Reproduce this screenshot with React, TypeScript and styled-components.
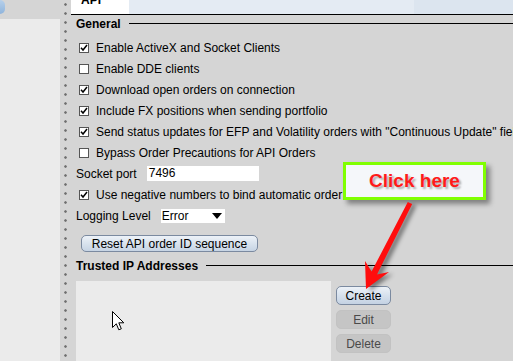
import { FC } from "react"
import styled, { createGlobalStyle } from "styled-components"

const GlobalStyle = createGlobalStyle`
    html, body {
        margin:0;
        padding:0;
        background:#d5d5d5;
    }
    body {
        font-family:"Liberation Sans", Arial, sans-serif;
        font-size:12px;
        color:#000;
    }
`

const Screen = styled.div`
    position:relative;
    display:flex;
    width:513px;
    height:361px;
    overflow:hidden;
    background:#d5d5d5;
`

const SidePanel = styled.div`
    width:60px;
    flex-shrink:0;
    display:flex;
    flex-direction:column;
    background:#ebebeb;
`

const SideTop = styled.div`
    height:19px;
    background:#d5d5d5;
    display:flex;
`

const Blob = styled.div`
    width:5px;
    height:14px;
    border-radius:0 6px 6px 0;
    background:linear-gradient(180deg, #b7d0ea, #8fb4dc);
`

const Splitter = styled.div`
    width:11px;
    flex-shrink:0;
    background-color:#d5d5d5;
    background-image:radial-gradient(circle, #6e6e6e 0, #6e6e6e 0.9px, rgba(110,110,110,0.35) 1.3px, transparent 1.8px);
    background-size:11px 9px;
    background-position:0 0;
`

const Main = styled.div`
    flex:1;
    display:flex;
    flex-direction:column;
    min-width:0;
`

const TabBar = styled.div`
    display:flex;
    height:14px;
    border-bottom:1px solid #000;
    flex-shrink:0;
`

const Tab = styled.div`
    width:58px;
    background:#fff;
    overflow:hidden;
    padding-left:10px;
    box-sizing:border-box;
    font-weight:bold;
    line-height:14px;

    & span {
        display:block;
        margin-top:-7px;
    }
`

const TabFill = styled.div<{ $color: string; $width?: number }>`
    background:${p => p.$color};
    ${p => p.$width ? `width:${p.$width}px;` : 'flex:1;'}
`

const Content = styled.div`
    display:flex;
    flex-direction:column;
    padding-left:5px;
`

const SectionHeader = styled.div<{ $top: number }>`
    display:flex;
    align-items:center;
    gap:8px;
    height:17px;
    margin-top:${p => p.$top}px;
    font-weight:bold;
    white-space:nowrap;

    &::after {
        content:'';
        flex:1;
        height:1px;
        background:#000;
    }
`

const Rows = styled.div`
    display:flex;
    flex-direction:column;
    margin-top:5px;
`

const CheckRow = styled.div`
    display:flex;
    align-items:center;
    gap:7px;
    height:21px;
    padding-left:3px;
    white-space:nowrap;
`

const Box = styled.span`
    width:10px;
    height:10px;
    flex-shrink:0;
    box-sizing:border-box;
    border:1px solid #555;
    background:#fff;
    display:flex;
    align-items:center;
    justify-content:center;
`

const FieldRow = styled.div`
    display:flex;
    align-items:center;
    gap:10px;
    height:21px;
    white-space:nowrap;
`

const TextField = styled.div`
    width:112px;
    height:15px;
    line-height:15px;
    background:#fff;
    padding-left:2px;
    box-sizing:border-box;
`

const Select = styled.div`
    width:64px;
    height:14px;
    line-height:14px;
    background:#fff;
    display:flex;
    align-items:center;
    justify-content:space-between;
    padding:0 3px 0 1px;
    box-sizing:border-box;
`

const ResetButton = styled.div`
    width:177px;
    height:17px;
    margin:9px 0 0 5px;
    box-sizing:border-box;
    border:1px solid #7b8aa0;
    border-radius:5px;
    background:linear-gradient(180deg, #edf2f8 0%, #d9e3ee 50%, #c6d4e4 100%);
    display:flex;
    align-items:center;
    justify-content:center;
`

const TrustedArea = styled.div`
    display:flex;
    gap:5px;
    margin-top:7px;
`

const ListBox = styled.div`
    position:relative;
    width:255px;
    height:90px;
    flex-shrink:0;
    background:#ebebeb;
`

const ButtonColumn = styled.div`
    display:flex;
    flex-direction:column;
    gap:5px;
    padding-top:5px;
`

const SideButton = styled.div<{ $disabled?: boolean }>`
    width:55px;
    height:19px;
    box-sizing:border-box;
    border-radius:5px;
    display:flex;
    align-items:center;
    justify-content:center;
    ${p => p.$disabled
        ? `background:#c5c5c5; color:#4a4a4a; border:1px solid #c2c2c2;`
        : `background:linear-gradient(180deg, #edf2f8 0%, #d7e1ed 50%, #c4d2e3 100%); border:1px solid #7b8aa0; color:#000;`}
`

const Cursor = styled.svg`
    position:absolute;
    left:36px;
    top:30px;
`

const Callout = styled.div`
    position:absolute;
    left:343px;
    top:162px;
    width:143px;
    height:38px;
    box-sizing:border-box;
    border:3px solid #80ff00;
    background:#f5f7fa;
    box-shadow:4px 4px 5px rgba(0,0,0,0.4);
    display:flex;
    align-items:center;
    justify-content:center;
    color:#ff1a1a;
    font-weight:bold;
    font-size:19px;
    text-shadow:2px 2px 2px rgba(0,0,0,0.3);
`

const ArrowLayer = styled.svg`
    position:absolute;
    left:0;
    top:0;
    pointer-events:none;

    & polygon {
        filter:drop-shadow(4px 2px 2px rgba(0,0,0,0.45));
    }
`

const Check: FC = () => (
    <svg width="8" height="8" viewBox="0 0 8 8">
        <polyline points="1,3.8 3,6 7,1" fill="none" stroke="#000" strokeWidth="1.5" />
    </svg>
)

const generalOptions = [
    { text: 'Enable ActiveX and Socket Clients', checked: true },
    { text: 'Enable DDE clients', checked: false },
    { text: 'Download open orders on connection', checked: true },
    { text: 'Include FX positions when sending portfolio', checked: true },
    { text: 'Send status updates for EFP and Volatility orders with "Continuous Update" field checked', checked: true },
    { text: 'Bypass Order Precautions for API Orders', checked: false },
]

const App: FC = () => {
    return (
        <Screen>
            <GlobalStyle />
            <SidePanel>
                <SideTop><Blob /></SideTop>
            </SidePanel>
            <Splitter />
            <Main>
                <TabBar>
                    <Tab><span>API</span></Tab>
                    <TabFill $color="#e4ebf3" />
                    <TabFill $color="#dce5ef" $width={99} />
                </TabBar>
                <Content>
                    <SectionHeader $top={0}>General</SectionHeader>
                    <Rows>
                        {generalOptions.map((option) => (
                            <CheckRow key={option.text}>
                                <Box>{option.checked && <Check />}</Box>
                                {option.text}
                            </CheckRow>
                        ))}
                        <FieldRow>
                            Socket port
                            <TextField>7496</TextField>
                        </FieldRow>
                        <CheckRow>
                            <Box><Check /></Box>
                            Use negative numbers to bind automatic order IDs
                        </CheckRow>
                        <FieldRow>
                            Logging Level
                            <Select>
                                Error
                                <svg width="10" height="6" viewBox="0 0 10 6">
                                    <polygon points="0,0 10,0 5,6" fill="#000" />
                                </svg>
                            </Select>
                        </FieldRow>
                    </Rows>
                    <ResetButton>Reset API order ID sequence</ResetButton>
                    <SectionHeader $top={5}>Trusted IP Addresses</SectionHeader>
                    <TrustedArea>
                        <ListBox>
                            <Cursor width="13" height="20" viewBox="0 0 13 20">
                                <path d="M0.5 0.5 L0.5 16.5 L4.3 12.8 L6.8 18.8 L9.3 17.8 L6.8 11.8 L11.8 11.8 Z" fill="#fff" stroke="#000" strokeWidth="1" strokeLinejoin="miter" />
                            </Cursor>
                        </ListBox>
                        <ButtonColumn>
                            <SideButton>Create</SideButton>
                            <SideButton $disabled>Edit</SideButton>
                            <SideButton $disabled>Delete</SideButton>
                        </ButtonColumn>
                    </TrustedArea>
                </Content>
            </Main>
            <Callout>Click here</Callout>
            <ArrowLayer width="513" height="361" viewBox="0 0 513 361">
                <polygon
                    points="366,289 389,272 377,274.4 412.2,204.1 407.8,201.9 371.6,271.6 365,261"
                    fill="#ff0d0d"
                />
            </ArrowLayer>
        </Screen>
    )
}

export default App
